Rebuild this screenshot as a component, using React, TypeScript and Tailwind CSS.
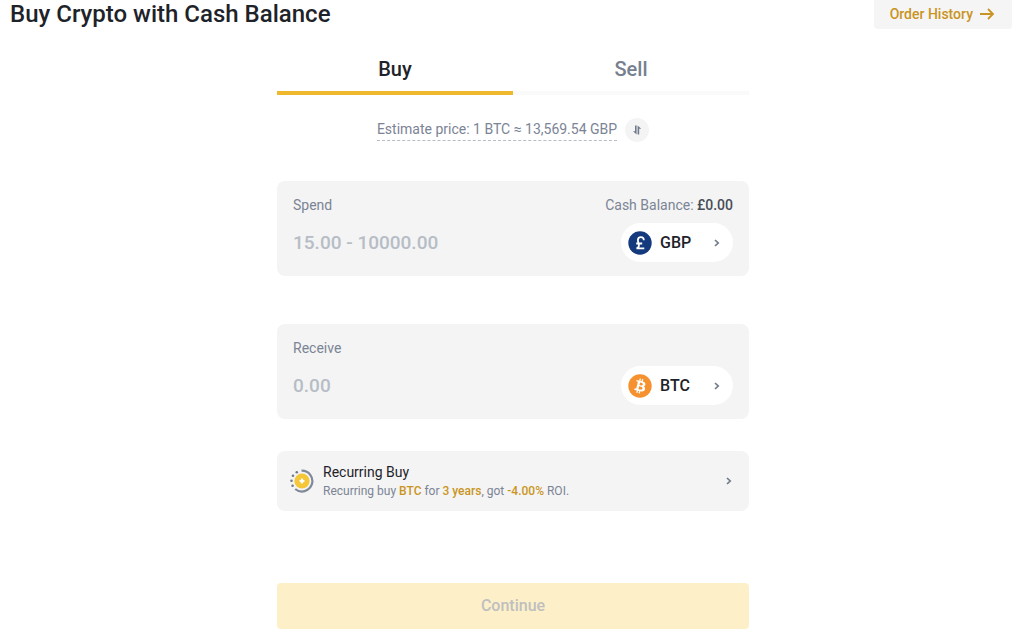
import { useState, type ReactNode } from "react";

type AmountCardProps = {
  id: string;
  label: string;
  placeholder: string;
  currency: string;
  icon: ReactNode;
  note?: ReactNode;
};

const tabs = ["Buy", "Sell"];

function ChevronIcon() {
  return (
    <svg viewBox="0 0 8 10" className="h-[10px] w-2 shrink-0" fill="none" stroke="#707a8a" strokeWidth="1.7" aria-hidden="true">
      <path d="M2 2 5.200 5 2 8" />
    </svg>
  );
}

function ArrowIcon() {
  return (
    <svg viewBox="0 0 16 12" className="h-3 w-4" fill="none" stroke="#c99423" strokeWidth="1.8" aria-hidden="true">
      <path d="M1 6h13M9 1l5 5-5 5" />
    </svg>
  );
}

function SwapIcon() {
  return (
    <svg viewBox="0 0 10 10" className="h-[10px] w-[10px]" fill="#707a8a" aria-hidden="true">
      <path d="M3 .5h1.6v9L1 6.2h2zM5.6 9.5H7.2V3.8h2L5.6.5z" />
    </svg>
  );
}

function PoundIcon() {
  return (
    <svg viewBox="0 0 24 24" className="h-6 w-6" aria-hidden="true">
      <circle cx="12" cy="12" r="11.7" fill="#14397d" />
      <path
        d="M15.8 9.2c0-2-1-3.1-2.9-3.1-2 0-3 1.2-3 3 0 2.2 1 3.1 1 5.1 0 1.5-.8 2.8-2.4 3.2h7.8M8.2 12.500h6"
        fill="none"
        stroke="#fff"
        strokeWidth="1.8"
      />
    </svg>
  );
}

function BitcoinIcon() {
  return (
    <svg viewBox="0 0 32 32" className="h-6 w-6" aria-hidden="true">
      <circle cx="16" cy="16" r="15.6" fill="#f5922f" />
      <path
        fill="#fff"
        d="M23.189 14.02c.314-2.096-1.283-3.223-3.465-3.975l.708-2.84-1.728-.43-.69 2.765c-.454-.114-.92-.22-1.385-.326l.695-2.783L15.596 6l-.708 2.839c-.376-.086-.746-.17-1.104-.26l.002-.009-2.384-.595-.46 1.846s1.283.294 1.256.312c.7.175.826.638.805 1.006l-.806 3.235c.048.012.11.03.18.057l-.183-.045-1.13 4.532c-.086.212-.303.531-.793.41.018.025-1.256-.313-1.256-.313l-.858 1.978 2.25.561c.418.105.828.215 1.231.318l-.715 2.872 1.727.43.708-2.84c.472.127.93.245 1.378.357l-.706 2.828 1.728.43.715-2.866c2.948.558 5.164.333 6.097-2.333.752-2.146-.037-3.385-1.588-4.192 1.13-.26 1.98-1.003 2.207-2.538zm-3.95 5.538c-.533 2.147-4.148.986-5.32.695l.95-3.805c1.172.293 4.929.872 4.37 3.11zm.535-5.569c-.487 1.953-3.495.96-4.47.717l.86-3.45c.975.243 4.118.696 3.61 2.733z"
      />
    </svg>
  );
}

function RecurringIcon() {
  return (
    <svg viewBox="0 0 24 24" className="h-6 w-6 shrink-0" aria-hidden="true">
      <path d="M11.5 1.700A10.400 10.400 0 1 1 5.200 20" fill="none" stroke="#7f8999" strokeWidth="2.2" />
      <g fill="#707a8a">
        <circle cx="6.8" cy="3.2" r="1.3" />
        <circle cx="3" cy="6.8" r="1.3" />
        <circle cx="1.500" cy="11.8" r="1.3" />
        <circle cx="2.6" cy="16.8" r="1.3" />
      </g>
      <circle cx="12" cy="12" r="7.6" fill="#f5c638" />
      <path d="m12 8.800 1.200 2 2 1.200-2 1.200-1.200 2-1.200-2-2-1.200 2-1.200z" fill="#fff" />
    </svg>
  );
}

function AmountCard({ id, label, placeholder, currency, icon, note }: AmountCardProps) {
  return (
    <section className="rounded-lg bg-[#f4f4f4] px-4 pt-3 pb-[14px]">
      <div className="flex items-center justify-between text-sm leading-6 text-[#7b8495]">
        <label htmlFor={id}>{label}</label>
        {note}
      </div>
      <div className="mt-[6px] flex items-center gap-4">
        <input
          id={id}
          inputMode="decimal"
          placeholder={placeholder}
          className="h-[39px] min-w-0 flex-1 bg-transparent text-[19px] font-medium text-[#1e2329] outline-none placeholder:text-[#b7bdc6]"
        />
        <button
          type="button"
          className="flex h-[39px] w-28 items-center rounded-full bg-white pr-3 pl-[7px] text-base font-medium text-[#1e2329]"
        >
          {icon}
          <span className="ml-2 flex-1 text-left">{currency}</span>
          <ChevronIcon />
        </button>
      </div>
    </section>
  );
}

export default function App() {
  const [activeTab, setActiveTab] = useState("Buy");

  return (
    <div className="bg-white pr-2 pl-[10px] font-['Roboto',sans-serif] text-[#1e2329]">
      <header className="flex items-start justify-between pr-1">
        <h1 className="text-2xl leading-7 font-medium">Buy Crypto with Cash Balance</h1>
        <a
          href="#orders"
          className="flex h-[29px] items-center gap-[6px] rounded-b bg-[#f5f5f5] pr-[17px] pb-[2px] pl-4 text-sm font-medium text-[#c99423]"
        >
          Order History
          <ArrowIcon />
        </a>
      </header>

      <main className="mx-auto mt-4 w-full max-w-[472px]">
        <div role="tablist" className="grid grid-cols-2">
          {tabs.map((tab) => (
            <button
              key={tab}
              type="button"
              role="tab"
              aria-selected={tab === activeTab}
              onClick={() => setActiveTab(tab)}
              className={
                tab === activeTab
                  ? "h-[50px] border-b-4 border-[#f0b92d] pt-[2px] text-xl font-medium"
                  : "h-[50px] border-b-4 border-[#fafafa] pt-[2px] text-xl font-medium text-[#76808f]"
              }
            >
              {tab}
            </button>
          ))}
        </div>

        <div className="mt-[23px] flex items-center justify-center gap-2">
          <p className="border-b border-dashed border-[#b7bdc6] text-sm leading-[21px] text-[#7b8495]">
            Estimate price: 1 BTC ≈ 13,569.54 GBP
          </p>
          <button
            type="button"
            aria-label="Swap price units"
            className="flex h-6 w-6 items-center justify-center rounded-full bg-[#f4f4f4]"
          >
            <SwapIcon />
          </button>
        </div>

        <div className="mt-[39px] space-y-12">
          <AmountCard
            id="spend"
            label="Spend"
            placeholder="15.00 - 10000.00"
            currency="GBP"
            icon={<PoundIcon />}
            note={
              <p>
                Cash Balance: <span className="font-medium text-[#474d57]">£0.00</span>
              </p>
            }
          />
          <AmountCard id="receive" label="Receive" placeholder="0.00" currency="BTC" icon={<BitcoinIcon />} />
        </div>

        <button type="button" className="mt-8 flex h-[60px] w-full items-center rounded-lg bg-[#f4f4f4] pr-4 pl-[13px] text-left">
          <RecurringIcon />
          <span className="ml-[9px] flex-1">
            <span className="block text-sm leading-5">Recurring Buy</span>
            <span className="block text-xs leading-[18px] text-[#7b8495]">
              Recurring buy <b className="font-medium text-[#c99423]">BTC</b> for{" "}
              <b className="font-medium text-[#c99423]">3 years</b>, got{" "}
              <b className="font-medium text-[#c99423]">-4.00%</b> ROI.
            </span>
          </span>
          <ChevronIcon />
        </button>

        <button
          type="button"
          disabled
          className="mt-[72px] h-[46px] w-full rounded bg-[#fdf0c9] text-base font-medium text-[#bfbfbf]"
        >
          Continue
        </button>
      </main>
    </div>
  );
}
